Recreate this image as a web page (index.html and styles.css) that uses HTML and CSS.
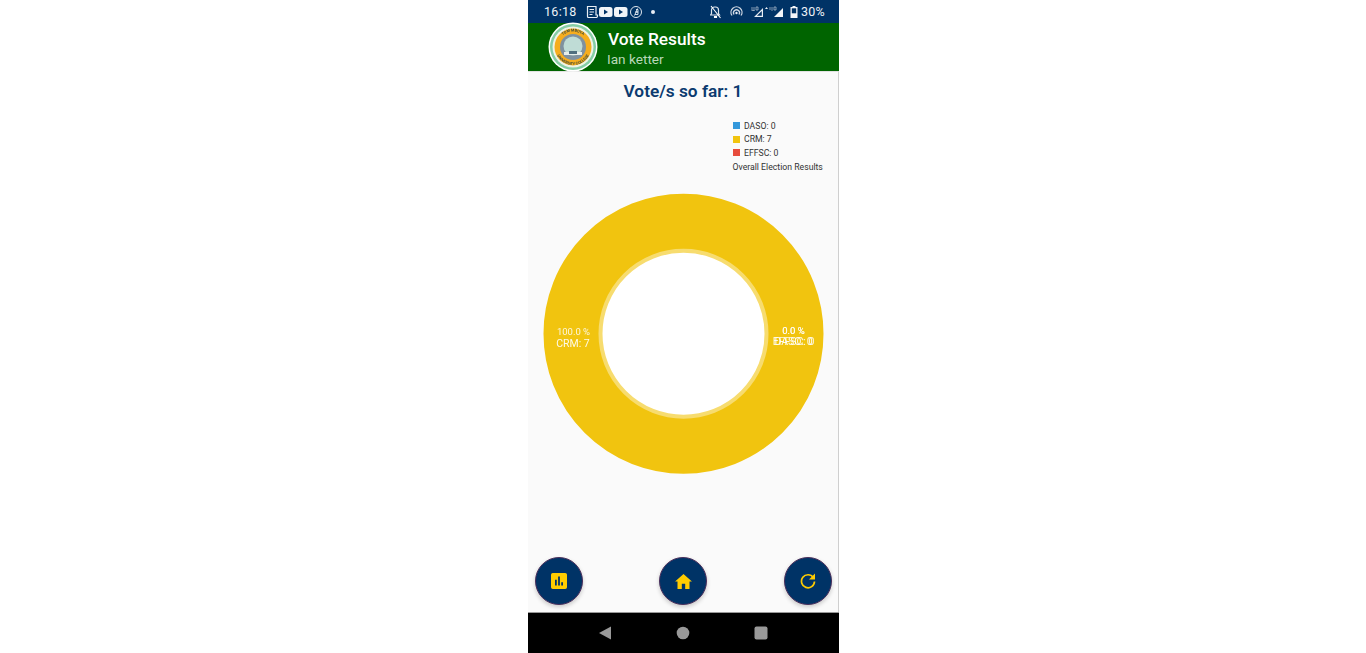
FILE: index.html
```html
<!DOCTYPE html>
<html lang="en">
<head>
<meta charset="utf-8">
<title>Vote Results</title>
<link rel="stylesheet" href="styles.css">
</head>
<body>
<div class="phone">
  <header class="status">
    <div class="status-left">
      <span class="time">16:18</span>
      <svg class="ic" width="58" height="14" viewBox="0 0 58 14">
        <path d="M2.500 1.500h8.500v8.500h1.500v1a1.500 1.500 0 0 1-1.500 1.500H3.500a1 1 0 0 1-1-1z" fill="none" stroke="#e8eef5" stroke-width="1.200"/><path d="M4.500 4h4.500v1H4.500zM4.500 6.500h4.500v1H4.500zM4.500 9h3v1h-3z" fill="#e8eef5"/>
        <rect x="14" y="2" width="13.500" height="10" rx="2.500" fill="#f0f4f8"/><path d="M19 4.600v4.800l4-2.400z" fill="#003366"/>
        <rect x="29" y="2" width="13.500" height="10" rx="2.500" fill="#f0f4f8"/><path d="M34 4.600v4.800l4-2.400z" fill="#003366"/>
        <circle cx="51" cy="7" r="5.500" fill="none" stroke="#dfe6ee" stroke-width="1"/><path d="M52.500 3.500 49.500 10.500M51 4.500h2v2.500h-2.500M50.500 7h2.500v2.500h-3" fill="none" stroke="#e8eef5" stroke-width=".9"/>
      </svg>
      <span class="dot"></span>
    </div>
    <div class="status-right">
      <svg class="ic" width="11" height="14" viewBox="0 0 11 14"><path d="M5.500 2a3 3 0 0 1 3 3v3.500l1 1.500h-9l1-1.500V5a3 3 0 0 1 3-3z" fill="none" stroke="#dfe6ee" stroke-width="1.200"/><path d="M4.500 11.500h2v1h-2zM1 1l9.500 12" stroke="#fff" stroke-width="1.100"/></svg>
      <svg class="ic gap-hot" width="13" height="14" viewBox="0 0 13 14"><path d="M2 10.500a5.500 5.500 0 1 1 9 0M4 9.500a3 3 0 1 1 5 0" fill="none" stroke="#cfd8e3" stroke-width="1.300"/><circle cx="6.500" cy="8" r="1.200" fill="#e8eef5"/></svg>
      <svg class="ic gap-sig" width="33" height="14" viewBox="0 0 33 14"><path d="M12 3v9H3zM10.800 5.900 5.900 10.800h4.900z" fill="#e8eef5" fill-rule="evenodd"/><path d="M14 4l1.500-2 1.500 2z" fill="#e8eef5"/><path d="M32 3v9H23z" fill="#f4f6f9"/><path d="M0.500 5.500h3M1 2v3M3 2v4M5 2h2v3H5zM19 2v3M21 2v4M23 2h2v3h-2z" stroke="#b9c5d4" stroke-width=".7" fill="none"/></svg>
      <svg class="ic gap-bat" width="8" height="14" viewBox="0 0 8 14"><path d="M2.500 1h3v1H7.500v11H.5V2h2z" fill="#f4f6f9"/><rect x="1.800" y="3.300" width="4.400" height="5" fill="#003366"/></svg>
      <span class="pct">30%</span>
    </div>
  </header>

  <div class="appbar">
    <svg class="logo" width="50" height="50" viewBox="0 0 50 50">
      <defs>
        <path id="arc-top" d="M9.500 25a15.500 15.500 0 0 1 31 0"/>
        <path id="arc-bot" d="M7 25a18 18 0 0 0 36 0"/>
      </defs>
      <circle cx="25" cy="25" r="24.500" fill="#fff"/>
      <circle cx="25" cy="25" r="23" fill="#86cda6"/>
      <circle cx="25" cy="25" r="20.500" fill="#eef3e6"/>
      <circle cx="25" cy="25" r="18.500" fill="#f6ad1e"/>
      <circle cx="25" cy="25" r="13" fill="#7f919f"/>
      <circle cx="25" cy="24" r="9.500" fill="#bfdcd6"/>
      <path d="M16 30h18v3H16z" fill="#e6eeea"/>
      <path d="M21 29h8v3h-8z" fill="#4f6f7f"/>
      <text class="logo-text"><textPath href="#arc-top" startOffset="50%" text-anchor="middle">TOM MBOYA</textPath></text>
      <text class="logo-text"><textPath href="#arc-bot" startOffset="50%" text-anchor="middle">UNIVERSITY COLLEGE</textPath></text>
    </svg>
    <div class="titles">
      <h1 class="title">Vote Results</h1>
      <p class="sub">Ian ketter</p>
    </div>
  </div>

  <main class="content">
    <h2 class="votes">Vote/s so far: 1</h2>
    <div class="legend">
      <div class="leg-row"><i class="sw sw-blue"></i>DASO: 0</div>
      <div class="leg-row"><i class="sw sw-yellow"></i>CRM: 7</div>
      <div class="leg-row"><i class="sw sw-red"></i>EFFSC: 0</div>
      <div class="leg-desc">Overall Election Results</div>
    </div>
    <svg class="donut" width="311" height="282" viewBox="0 0 311 282">
      <circle cx="155.500" cy="141.750" r="110.500" fill="none" stroke="#f1c40f" stroke-width="59"/>
      <circle cx="155.500" cy="141.750" r="83" fill="#fff"/>
      <circle cx="155.500" cy="141.750" r="83" fill="none" stroke="#f7dc6f" stroke-width="4"/>
      <g class="slice-text">
        <text class="pv" x="45.500" y="142.500" text-anchor="middle">100.0 %</text>
        <text class="lb" x="45" y="154.500" text-anchor="middle">CRM: 7</text>
        <text class="pv" x="265.500" y="141.500" text-anchor="middle">0.0 %</text>
        <text class="pv" x="265.500" y="141.500" text-anchor="middle">0.0 %</text>
        <text class="lb" x="265.500" y="153" text-anchor="middle">DASO: 0</text>
        <text class="lb" x="265.500" y="153" text-anchor="middle">EFFSC: 0</text>
      </g>
    </svg>
    <div class="fabs">
      <button class="fab" aria-label="Charts"><svg width="16" height="16" viewBox="0 0 18 18"><path d="M2 0h14a2 2 0 0 1 2 2v14a2 2 0 0 1-2 2H2a2 2 0 0 1-2-2V2a2 2 0 0 1 2-2zm2.500 7.500v6.500h2V7.500zM8 4v10h2V4zm3.500 6.500V14h2v-3.500z" fill="#ffcc00" fill-rule="evenodd"/></svg></button>
      <button class="fab" aria-label="Home"><svg width="17" height="15" viewBox="0 0 18 16"><path d="M9 0 0 8h2.600v8h4.600v-5.500h3.600V16h4.600V8H18z" fill="#ffcc00"/></svg></button>
      <button class="fab" aria-label="Refresh"><svg width="16" height="16" viewBox="0 0 16 16"><path d="M13.300 4.500A6.500 6.500 0 1 0 14.500 8.500" fill="none" stroke="#ffcc00" stroke-width="1.700"/><path d="M15 0.500v6h-6z" fill="#ffcc00"/></svg></button>
    </div>
  </main>

  <nav class="navbar">
    <svg width="14" height="14" viewBox="0 0 14 14"><path d="M13 0.500v13L1 7z" fill="#999"/></svg>
    <svg width="14" height="14" viewBox="0 0 14 14"><circle cx="7" cy="7" r="6.300" fill="#999"/></svg>
    <svg width="14" height="14" viewBox="0 0 14 14"><rect x="0.500" y="0.500" width="13" height="13" rx="2" fill="#999"/></svg>
  </nav>
</div>
</body>
</html>
```

FILE: styles.css
```css
* { box-sizing: border-box; }
html, body { margin: 0; height: 100%; background: #fff; }
body { font-family: Roboto, "Liberation Sans", sans-serif; overflow: hidden; }

.phone {
  width: 311px;
  height: 653px;
  margin: 0 0 0 528px;
  display: flex;
  flex-direction: column;
}

.status {
  height: 23px;
  background: #003366;
  color: #eef2f7;
  display: flex;
  align-items: center;
  justify-content: space-between;
  padding: 0 14px 0 16px;
  font-size: 12.500px;
  flex: none;
}
.status-left, .status-right { display: flex; align-items: center; }
.time { margin-right: 8px; letter-spacing: .3px; }
.ic { display: block; }
.dot { width: 4px; height: 4px; border-radius: 50%; background: #e8eef5; margin-left: 8px; }
.gap-hot { margin-left: 9px; }
.gap-sig { margin-left: 8px; }
.gap-bat { margin-left: 6px; }
.pct { margin-left: 3px; letter-spacing: .3px; }

.appbar {
  height: 48px;
  background: #006400;
  display: flex;
  align-items: center;
  padding-left: 20px;
  flex: none;
}
.logo { display: block; flex: none; filter: blur(.5px); }
.logo-text { font-size: 3.800px; font-weight: 700; fill: #3d4a3a; }
.titles { margin-left: 10px; padding-top: 2px; }
.title { margin: 0; font-size: 17.300px; line-height: 22px; font-weight: 500; color: #fff; }
.sub { margin: 0 0 0 -1px; font-size: 13.600px; line-height: 18px; color: #b9d8b9; }

.content {
  flex: 1;
  background: #fafafa;
  border-top: 1px solid #e2e2e2;
  border-right: 1px solid #cfcfcf;
  display: flex;
  flex-direction: column;
  min-height: 0;
}
.votes {
  margin: 8px 0 0;
  font-size: 17.300px;
  line-height: 22px;
  color: #0b3a6f;
  text-align: center;
  font-weight: 600;
}
.legend {
  margin: 17px 0 0 204.500px;
  font-size: 8.700px;
  color: #333;
}
.leg-row { display: flex; align-items: center; height: 13.500px; }
.leg-desc { height: 14px; line-height: 14px; }
.sw { width: 7px; height: 7px; margin-right: 4.500px; display: block; }
.sw-blue { background: #3498db; }
.sw-yellow { background: #f1c40f; }
.sw-red { background: #e74c3c; }

.donut { display: block; flex: none; margin-top: 18px; }
.slice-text text { fill: #fff; }
.pv { font-size: 9.500px; opacity: .85; }
.lb { font-size: 10.500px; opacity: .9; }

.fabs {
  display: flex;
  gap: 76px;
  padding-left: 7px;
  margin-top: auto;
  margin-bottom: 7px;
}
.fab {
  width: 48px;
  height: 48px;
  border-radius: 50%;
  border: 1px solid #4a2f5c;
  background: #003366;
  padding: 0;
  display: flex;
  align-items: center;
  justify-content: center;
  box-shadow: 0 2px 4px rgba(0,0,0,.2);
}
.fab:last-child { margin-left: 1px; }
.fab svg { display: block; }

.navbar {
  height: 41px;
  background: #000;
  flex: none;
  display: flex;
  align-items: center;
  justify-content: center;
  gap: 64px;
  padding-right: 2px;
  border-top: 1px solid #999;
}
```
